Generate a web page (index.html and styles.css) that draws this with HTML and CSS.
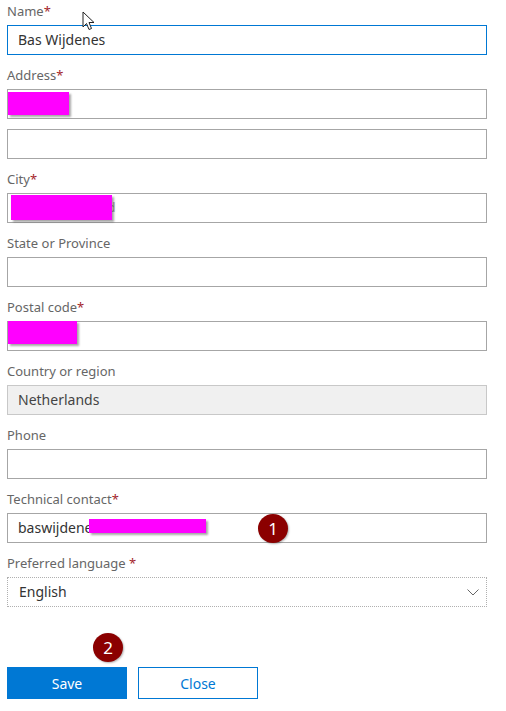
FILE: index.html
```html
<!DOCTYPE html>
<html>
<head>
<meta charset="utf-8">
<link rel="stylesheet" href="styles.css">
</head>
<body>
<form class="form">
  <div class="field">
    <div class="label">Name<span class="req">*</span></div>
    <div class="input active">Bas Wijdenes</div>
  </div>
  <div class="field">
    <div class="label">Address<span class="req">*</span></div>
    <div class="input"><span class="redact r-addr"></span></div>
    <div class="input extra"></div>
  </div>
  <div class="field">
    <div class="label">City<span class="req">*</span></div>
    <div class="input"><span class="residue">d</span><span class="redact r-city"></span></div>
  </div>
  <div class="field">
    <div class="label">State or Province</div>
    <div class="input"></div>
  </div>
  <div class="field">
    <div class="label">Postal code<span class="req">*</span></div>
    <div class="input"><span class="redact r-postal"></span></div>
  </div>
  <div class="field">
    <div class="label">Country or region</div>
    <div class="input disabled">Netherlands</div>
  </div>
  <div class="field">
    <div class="label">Phone</div>
    <div class="input"></div>
  </div>
  <div class="field">
    <div class="label">Technical contact<span class="req">*</span></div>
    <div class="input tech">baswijdenes<span class="redact r-tech"></span><span class="badge b1">1</span></div>
  </div>
  <div class="field">
    <div class="label">Preferred language <span class="req">*</span></div>
    <div class="input select">English
      <svg class="chev" width="12" height="7" viewBox="0 0 12 7"><polyline points="0.5,0.5 6,6 11.5,0.5" fill="none" stroke="#666" stroke-width="1"/></svg>
    </div>
  </div>
  <div class="actions">
    <span class="badge b2">2</span>
    <button type="button" class="btn primary">Save</button>
    <button type="button" class="btn secondary">Close</button>
  </div>
  <svg class="cursor" width="14" height="20" viewBox="0 0 14 20"><path d="M1 1 L1 16 L4.5 12.5 L7 18.5 L9.5 17.5 L7 11.5 L12 11.5 Z" fill="#fff" stroke="#222" stroke-width="1"/></svg>
</form>
</body>
</html>
```
FILE: styles.css
```css
* { box-sizing: border-box; }
html, body { margin: 0; padding: 0; background: #fff; }
body {
  font-family: "Noto Sans", "Open Sans", sans-serif;
  color: #333;
}
.form {
  position: relative;
  width: 506px;
  padding: 1px 0 0 7px;
}
.field {
  display: flex;
  flex-direction: column;
  margin-bottom: 10px;
}
.label {
  font-size: 13px;
  line-height: 20px;
  color: #666;
  margin-bottom: 4px;
  height: 20px;
}
.req { color: #a4262c; }
.input {
  position: relative;
  width: 480px;
  height: 30px;
  border: 1px solid #a6a6a6;
  background: #fff;
  font-size: 14px;
  line-height: 28px;
  padding-left: 10px;
  color: #333;
  display: flex;
  align-items: center;
}
.input.extra { margin-top: 10px; }
.input.active { border-color: #0078d4; }
.input.disabled { background: #f0f0f0; border-color: #c8c8c8; color: #444; }
.input.select { border: 1px dotted #b0b0b0; padding-left: 11px; }
.chev { position: absolute; right: 7px; top: 11px; }
.residue { padding-left: 90px; color: #999; font-size: 12px; }
.redact {
  position: absolute;
  background: #ff00ff;
  box-shadow: 2px 2px 2px rgba(0,0,0,0.35);
}
.r-addr { left: 0; top: 2px; width: 61px; height: 23px; }
.r-city { left: 3px; top: 1px; width: 101px; height: 25px; }
.r-postal { left: 0; top: -1px; width: 69px; height: 23px; }
.r-tech { left: 81px; top: 5px; width: 117px; height: 14px; }
.badge {
  position: absolute;
  width: 30px;
  height: 29px;
  border-radius: 50%;
  background: #8b0000;
  color: #fff;
  font-size: 17px;
  line-height: 29px;
  text-align: center;
  box-shadow: 1px 1px 2px rgba(0,0,0,0.3);
}
.b1 { left: 250px; top: 0px; }
.b2 { left: 86px; top: -34px; }
.actions {
  position: relative;
  display: flex;
  gap: 11px;
  margin-top: 60px;
}
.btn {
  width: 120px;
  height: 32px;
  font-family: "Noto Sans", "Open Sans", sans-serif;
  font-size: 14px;
  border: 1px solid #0078d4;
  padding: 0;
  cursor: pointer;
}
.btn.primary { background: #0078d4; color: #fff; }
.btn.secondary { background: #fff; color: #0078d4; }
.cursor { position: absolute; left: 82px; top: 11px; }
```
